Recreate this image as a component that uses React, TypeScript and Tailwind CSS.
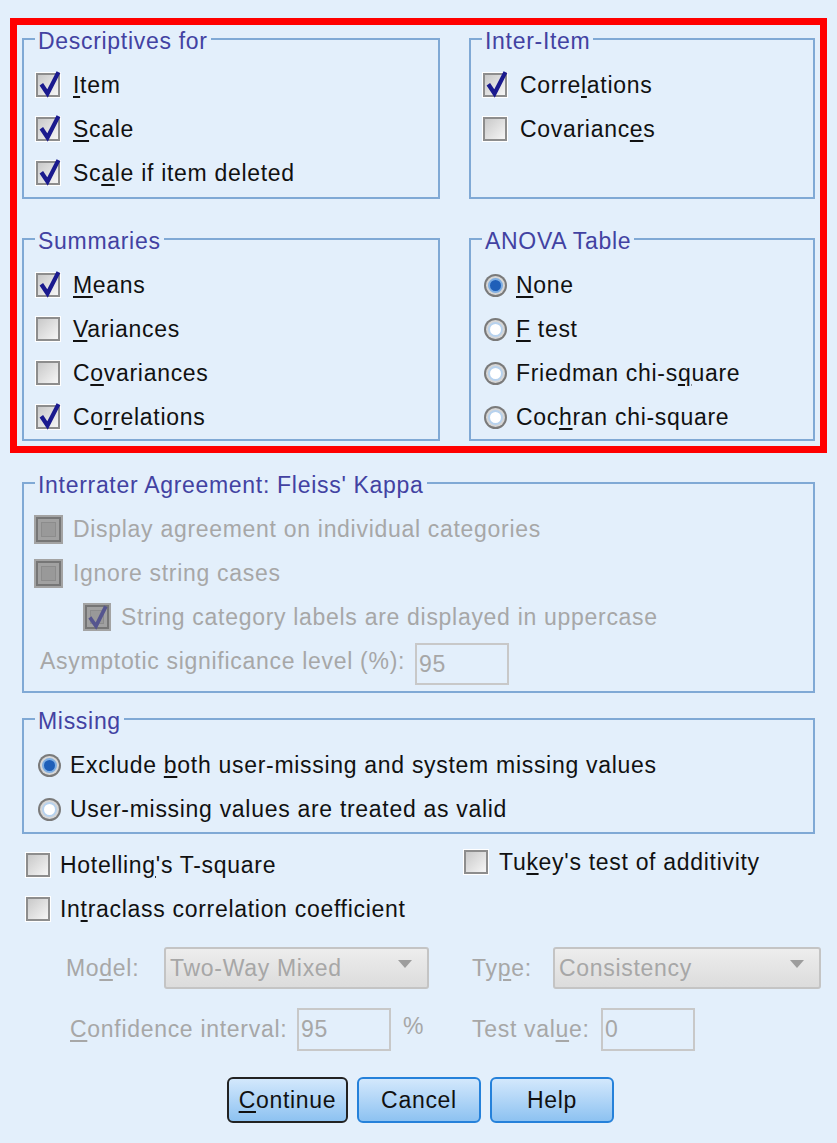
import React from "react";

const U = ({ c }: { c: string }) => (
  <span className="underline decoration-2 underline-offset-[3px]">{c}</span>
);

function CheckBox({ checked = false }: { checked?: boolean }) {
  return (
    <span className="relative block shrink-0 w-[26px] h-[26px] border border-white bg-white">
      <span className="block w-full h-full border-2 border-[#8d8d8d] bg-gradient-to-br from-[#c9c9c9] to-[#f6f6f6]" />
      {checked && (
        <svg className="absolute left-0 top-[-4px]" width="26" height="30" viewBox="0 0 26 30">
          <path d="M6.5 17 L11.5 24.5 L21.5 5" fill="none" stroke="#1a1a8e" strokeWidth="4.2" strokeLinecap="square" />
        </svg>
      )}
    </span>
  );
}

function DisabledBox({ checked = false, small = false }: { checked?: boolean; small?: boolean }) {
  return (
    <span className={"relative block shrink-0 bg-[#a3a3a3] p-[2px] " + (small ? "w-[28px] h-[28px]" : "w-[29px] h-[29px]")}>
      <span className="block w-full h-full border-2 border-[#767676] bg-[#a1a1a1] p-[3px]">
        <span className="block w-full h-full border border-[#8c8c8c] bg-[#999999]" />
      </span>
      {checked && (
        <svg className="absolute left-0 top-[-2px]" width="28" height="30" viewBox="0 0 28 30">
          <path d="M8 18 L13 25 L22 7" fill="none" stroke="#55558f" strokeWidth="3.8" strokeLinecap="square" />
        </svg>
      )}
    </span>
  );
}

function Radio({ on = false }: { on?: boolean }) {
  return (
    <span className="block shrink-0 w-[23px] h-[23px] rounded-full bg-[#7a7a7a] p-[2px]">
      <span className="block w-full h-full rounded-full bg-[#d6d6d6] p-[2px]">
        <span
          className={
            "block w-full h-full rounded-full border-2 " +
            (on ? "bg-[#1f5fb8] border-[#7eaee3]" : "bg-white border-[#b7d2ee]")
          }
        />
      </span>
    </span>
  );
}

function Group({
  title,
  className,
  inner,
  children,
}: {
  title: string;
  className: string;
  inner: string;
  children: React.ReactNode;
}) {
  return (
    <fieldset className={"border-2 border-[#80a9d5] min-w-0 " + className}>
      <legend className="ml-[11px] px-[3px] pt-[4px] leading-[24px] text-[#4242a2]">{title}</legend>
      <div className={inner}>{children}</div>
    </fieldset>
  );
}

function Row({ children }: { children: React.ReactNode }) {
  return <div className="h-[44px] flex items-center gap-[12px] whitespace-nowrap">{children}</div>;
}

function RRow({ children }: { children: React.ReactNode }) {
  return <div className="h-[44px] flex items-center gap-[9px] whitespace-nowrap">{children}</div>;
}

function Btn({ children, def = false }: { children: React.ReactNode; def?: boolean }) {
  return (
    <div
      className={
        "h-[46px] flex items-center justify-center rounded-[6px] border-2 bg-gradient-to-b from-[#d3e8fc] to-[#8dc2f1] text-[#111] " +
        (def ? "w-[121px] border-[#222222]" : "w-[124px] border-[#2581da]")
      }
    >
      {children}
    </div>
  );
}

export default function App() {
  return (
    <div className="w-[837px] h-[1143px] overflow-hidden bg-[#e3effb] font-['Liberation_Sans',Arial,sans-serif] text-[23px] tracking-[0.7px] text-[#111]">
      <div className="pt-[18px] px-[10px]">
        <div className="border-[7px] border-[#ff0000] px-[5px] pt-0 pb-[5px] grid grid-cols-[418px_346px] gap-x-[29px] gap-y-[26px]">
          <Group title="Descriptives for" className="pb-[2px]" inner="pl-[11px] pt-[10px]">
            <Row>
              <CheckBox checked />
              <span>
                <U c="I" />tem
              </span>
            </Row>
            <Row>
              <CheckBox checked />
              <span>
                <U c="S" />cale
              </span>
            </Row>
            <Row>
              <CheckBox checked />
              <span>
                Sc<U c="a" />le if item deleted
              </span>
            </Row>
          </Group>
          <Group title="Inter-Item" className="pb-[2px]" inner="pl-[11px] pt-[10px]">
            <Row>
              <CheckBox checked />
              <span>
                Corre<U c="l" />ations
              </span>
            </Row>
            <Row>
              <CheckBox />
              <span>
                Covarianc<U c="e" />s
              </span>
            </Row>
          </Group>
          <Group title="Summaries" className="" inner="pl-[11px] pt-[10px]">
            <Row>
              <CheckBox checked />
              <span>
                <U c="M" />eans
              </span>
            </Row>
            <Row>
              <CheckBox />
              <span>
                <U c="V" />ariances
              </span>
            </Row>
            <Row>
              <CheckBox />
              <span>
                C<U c="o" />variances
              </span>
            </Row>
            <Row>
              <CheckBox checked />
              <span>
                Co<U c="r" />relations
              </span>
            </Row>
          </Group>
          <Group title="ANOVA Table" className="" inner="pl-[13px] pt-[10px]">
            <RRow>
              <Radio on />
              <span>
                <U c="N" />one
              </span>
            </RRow>
            <RRow>
              <Radio />
              <span>
                <U c="F" /> test
              </span>
            </RRow>
            <RRow>
              <Radio />
              <span>
                Friedman chi-s<U c="q" />uare
              </span>
            </RRow>
            <RRow>
              <Radio />
              <span>
                Coc<U c="h" />ran chi-square
              </span>
            </RRow>
          </Group>
        </div>
      </div>

      <div className="pl-[22px] w-[815px]">
        <Group title="Interrater Agreement: Fleiss' Kappa" className="mt-[16px] pb-[8px]" inner="pl-[10px] pt-[10px]">
          <div className="h-[44px] flex items-center gap-[10px] whitespace-nowrap text-[#a7a7a7]">
            <DisabledBox />
            <span>Display agreement on individual categories</span>
          </div>
          <div className="h-[44px] flex items-center gap-[10px] whitespace-nowrap text-[#a7a7a7]">
            <DisabledBox />
            <span>Ignore string cases</span>
          </div>
          <div className="h-[44px] flex items-center gap-[10px] whitespace-nowrap text-[#a7a7a7] pl-[49px]">
            <DisabledBox checked small />
            <span>String category labels are displayed in uppercase</span>
          </div>
          <div className="h-[44px] flex items-center gap-[10px] whitespace-nowrap text-[#a7a7a7] pl-[6px]">
            <span>Asymptotic significance level (%):</span>
            <div className="w-[94px] h-[42px] border-2 border-[#c8c8c8] flex items-center pl-[2px] mt-[6px]">95</div>
          </div>
        </Group>

        <Group title="Missing" className="mt-[12px] pb-[1px]" inner="pl-[14px] pt-[10px]">
          <RRow>
            <Radio on />
            <span>
              Exclude <U c="b" />oth user-missing and system missing values
            </span>
          </RRow>
          <RRow>
            <Radio />
            <span>User-missing values are treated as valid</span>
          </RRow>
        </Group>
      </div>

      <div className="mt-[9px] grid grid-cols-[440px_372px] pl-[25px]">
        <div className="h-[44px] flex items-center gap-[9px] whitespace-nowrap">
          <CheckBox />
          <span>
            Hotellin<U c="g" />'s T-square
          </span>
        </div>
        <div className="h-[44px] flex items-center gap-[10px] whitespace-nowrap -mt-[3px] -ml-[2px]">
          <CheckBox />
          <span>
            Tu<U c="k" />ey's test of additivity
          </span>
        </div>
        <div className="h-[44px] flex items-center gap-[9px] whitespace-nowrap">
          <CheckBox />
          <span>
            In<U c="t" />raclass correlation coefficient
          </span>
        </div>
      </div>

      <div className="mt-[16px] flex items-center text-[#a7a7a7] whitespace-nowrap">
        <span className="ml-[66px] w-[98px]">
          Mo<U c="d" />el:
        </span>
        <div className="w-[265px] h-[42px] border-2 border-[#c4c4c4] rounded-[3px] bg-gradient-to-b from-[#ededed] to-[#dcdcdc] flex items-center pl-[4px] pr-[15px]">
          <span className="flex-1">Two-Way Mixed</span>
          <svg width="14" height="8" viewBox="0 0 14 8" className="mb-[8px]">
            <polygon points="0,0 14,0 7,8" fill="#9d9d9d" />
          </svg>
        </div>
        <span className="ml-[43px] w-[81px]">
          Ty<U c="p" />e:
        </span>
        <div className="w-[268px] h-[42px] border-2 border-[#c4c4c4] rounded-[3px] bg-gradient-to-b from-[#ededed] to-[#dcdcdc] flex items-center pl-[4px] pr-[15px]">
          <span className="flex-1">Consistency</span>
          <svg width="14" height="8" viewBox="0 0 14 8" className="mb-[8px]">
            <polygon points="0,0 14,0 7,8" fill="#9d9d9d" />
          </svg>
        </div>
      </div>

      <div className="mt-[19px] flex items-center text-[#a7a7a7] whitespace-nowrap">
        <span className="ml-[70px] w-[227px]">
          <U c="C" />onfidence interval:
        </span>
        <div className="w-[94px] h-[43px] border-2 border-[#c8c8c8] flex items-center pl-[2px]">95</div>
        <span className="ml-[12px] w-[69px] -mt-[6px]">%</span>
        <span className="w-[129px]">
          Test val<U c="u" />e:
        </span>
        <div className="w-[94px] h-[43px] border-2 border-[#c8c8c8] flex items-center pl-[2px]">0</div>
      </div>

      <div className="mt-[26px] ml-[227px] flex gap-[9px]">
        <Btn def>
          <span>
            <U c="C" />ontinue
          </span>
        </Btn>
        <Btn>Cancel</Btn>
        <Btn>Help</Btn>
      </div>
    </div>
  );
}
